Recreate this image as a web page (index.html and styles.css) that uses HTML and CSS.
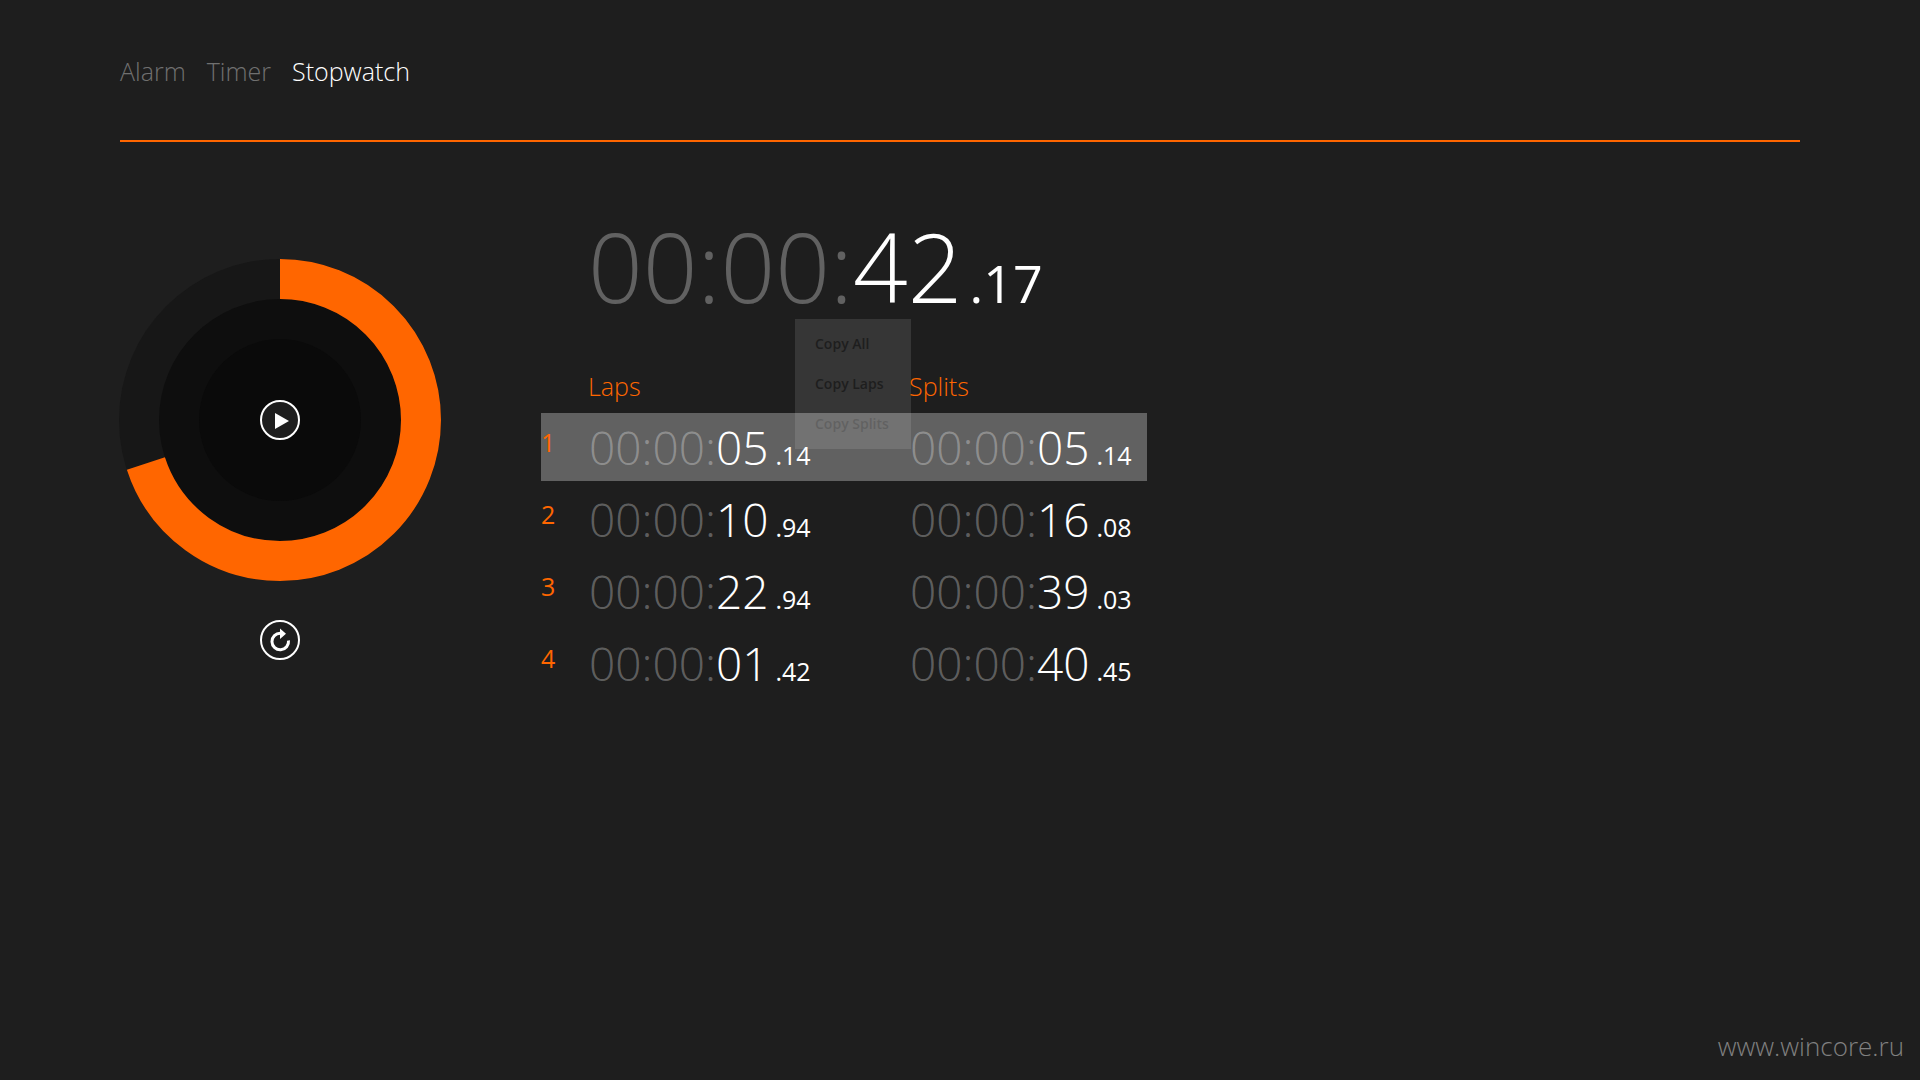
FILE: index.html
```html
<!DOCTYPE html>
<html lang="en">

<head>
    <meta charset="UTF-8">
    <meta name="viewport" content="width=device-width, initial-scale=1.0">
    <title>Stopwatch</title>
    <link rel="stylesheet" href="styles.css">
</head>

<body>
    <header>
        <nav>
            <a href="#alarm">Alarm</a>
            <a href="#timer">Timer</a>
            <a href="#stopwatch" class="active">Stopwatch</a>
        </nav>
    </header>

    <main>
        <div class="controls">
            <div class="dial">
                <svg viewBox="0 0 322 322">
                    <circle cx="161" cy="161" r="161" fill="#171717" />
                    <circle cx="161" cy="161" r="121" fill="#0e0e0e" />
                    <circle cx="161" cy="161" r="81" fill="#0a0a0a" />
                    <circle cx="161" cy="161" r="141" fill="none" stroke="#ff6600" stroke-width="40"
                        pathLength="100" stroke-dasharray="70 100" transform="rotate(-90 161 161)" />
                </svg>
                <button class="round-btn" aria-label="Start">
                    <svg viewBox="0 0 40 40">
                        <circle cx="20" cy="20" r="19" fill="#1e1e1e" stroke="white" stroke-width="2" />
                        <polygon points="15,13 29,21 15,29" fill="white" />
                    </svg>
                </button>
            </div>
            <button class="round-btn" aria-label="Reset">
                <svg viewBox="0 0 40 40">
                    <circle cx="20" cy="20" r="19" fill="none" stroke="white" stroke-width="2" />
                    <path d="M28.5 20.5 A8.3 8.3 0 1 1 20.5 13.2" fill="none" stroke="white" stroke-width="3" />
                    <polygon points="20,8.5 26,13.8 20,19" fill="white" />
                </svg>
            </button>
        </div>

        <section class="results">
            <div class="time total"><span class="dim">00:00:</span><span class="sec">42</span><span class="cs">.17</span></div>

            <div class="menu">
                <button>Copy All</button>
                <button>Copy Laps</button>
                <button>Copy Splits</button>
            </div>

            <table>
                <thead>
                    <tr>
                        <td></td>
                        <th>Laps</th>
                        <th>Splits</th>
                    </tr>
                </thead>
                <tbody>
                    <tr class="selected">
                        <th>1</th>
                        <td><div class="time"><span class="dim">00:00:</span><span class="sec">05</span><span class="cs">.14</span></div></td>
                        <td><div class="time"><span class="dim">00:00:</span><span class="sec">05</span><span class="cs">.14</span></div></td>
                    </tr>
                    <tr>
                        <th>2</th>
                        <td><div class="time"><span class="dim">00:00:</span><span class="sec">10</span><span class="cs">.94</span></div></td>
                        <td><div class="time"><span class="dim">00:00:</span><span class="sec">16</span><span class="cs">.08</span></div></td>
                    </tr>
                    <tr>
                        <th>3</th>
                        <td><div class="time"><span class="dim">00:00:</span><span class="sec">22</span><span class="cs">.94</span></div></td>
                        <td><div class="time"><span class="dim">00:00:</span><span class="sec">39</span><span class="cs">.03</span></div></td>
                    </tr>
                    <tr>
                        <th>4</th>
                        <td><div class="time"><span class="dim">00:00:</span><span class="sec">01</span><span class="cs">.42</span></div></td>
                        <td><div class="time"><span class="dim">00:00:</span><span class="sec">40</span><span class="cs">.45</span></div></td>
                    </tr>
                </tbody>
            </table>
        </section>
    </main>

    <footer>www.wincore.ru</footer>
</body>

</html>
```

FILE: styles.css
```css
* {
    margin: 0;
    padding: 0;
    box-sizing: border-box;
}

body {
    min-height: 100vh;
    display: flex;
    flex-direction: column;
    background-color: #1e1e1e;
    color: white;
    font-family: "Open Sans", "Noto Sans", sans-serif;
    font-weight: 300;
}

button {
    border: 0;
    background: none;
    font-family: inherit;
    cursor: pointer;
}

header {
    margin: 0 120px;
    padding: 51px 0 49px;
    border-bottom: 2px solid #ff6600;
}

nav {
    display: flex;
    gap: 21px;
    font-size: 25px;
    line-height: 40px;
}

nav a {
    color: #707070;
    text-decoration: none;
}

nav .active {
    color: white;
}

main {
    flex: 1;
    display: flex;
    gap: 100px;
    padding: 70px 119px 0;
}

.controls {
    display: flex;
    flex-direction: column;
    align-items: center;
    gap: 39px;
    padding-top: 47px;
}

.dial {
    display: grid;
    place-items: center;
    width: 322px;
    height: 322px;
}

.dial > * {
    grid-area: 1 / 1;
}

.round-btn {
    width: 40px;
    height: 40px;
}

.round-btn svg {
    display: block;
}

.results {
    position: relative;
}

/* time readout */
.time {
    display: flex;
    align-items: baseline;
    padding-left: 1px;
    font-size: 46px;
    line-height: 68px;
}

.dim {
    color: rgba(255, 255, 255, 0.3);
}

.cs {
    margin-left: 7px;
    font-size: 25px;
    font-weight: 400;
    line-height: 1;
}

.total {
    padding-left: 47px;
    font-size: 96px;
    line-height: 108px;
}

.total .cs {
    margin-left: 7px;
    font-size: 52px;
}

/* copy menu, stays under the selected row */
.menu {
    position: absolute;
    top: 107px;
    left: 254px;
    display: flex;
    flex-direction: column;
    min-width: 116px;
    padding: 5px 0;
    background-color: rgba(255, 255, 255, 0.11);
}

.menu button {
    padding: 0 20px;
    color: #1e1e1e;
    font-size: 14px;
    font-weight: 600;
    line-height: 40px;
    text-align: left;
}

table {
    position: relative;
    table-layout: fixed;
    width: 606px;
    margin-top: 42px;
    border-collapse: separate;
    border-spacing: 0 4px;
}

th {
    color: #ff6600;
    font-size: 25px;
    font-weight: 300;
    line-height: 40px;
    text-align: left;
}

thead td {
    width: 47px;
}

thead th {
    padding-bottom: 3px;
}

thead th:nth-child(2) {
    width: 321px;
}

tbody th {
    padding-top: 9px;
    font-weight: 400;
    vertical-align: top;
}

.selected {
    background-color: rgba(255, 255, 255, 0.3);
}

footer {
    padding: 0 16px 14px;
    color: #808080;
    font-size: 26px;
    line-height: 40px;
    text-align: right;
}
```
